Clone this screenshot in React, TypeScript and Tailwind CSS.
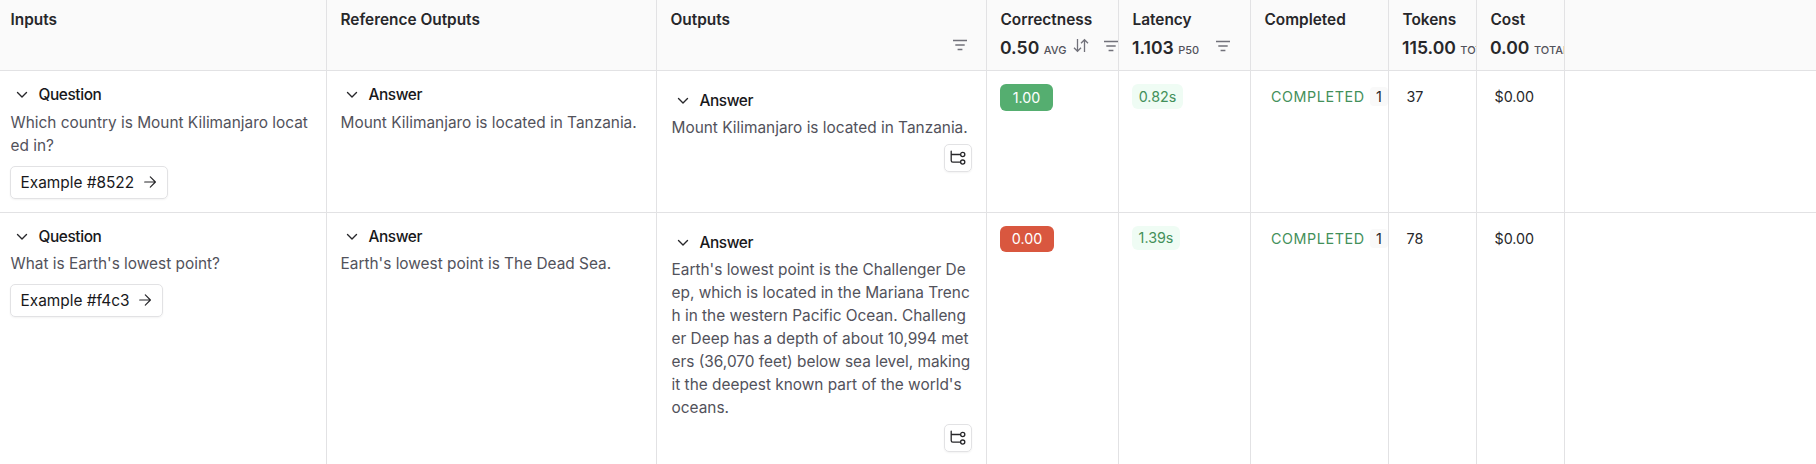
import type { ReactNode } from "react";

const GRID =
  "grid grid-cols-[327px_330px_330px_132px_132px_138px_88px_88px_minmax(0,1fr)]";

type Row = {
  question: string;
  example: string;
  reference: string;
  output: string;
  score: string;
  scoreClass: string;
  latency: string;
  latencyClass: string;
  tokens: string;
  gapClass: string;
};

const rows: Row[] = [
  {
    question: "Which country is Mount Kilimanjaro located in?",
    example: "Example #8522",
    reference: "Mount Kilimanjaro is located in Tanzania.",
    output: "Mount Kilimanjaro is located in Tanzania.",
    score: "1.00",
    scoreClass: "h-[27px] w-[53px] bg-[#55ae70]",
    latency: "0.82s",
    latencyClass: "h-[25px] w-[51px]",
    tokens: "37",
    gapClass: "gap-[5px]",
  },
  {
    question: "What is Earth's lowest point?",
    example: "Example #f4c3",
    reference: "Earth's lowest point is The Dead Sea.",
    output:
      "Earth's lowest point is the Challenger Deep, which is located in the Mariana Trench in the western Pacific Ocean. Challenger Deep has a depth of about 10,994 meters (36,070 feet) below sea level, making it the deepest known part of the world's oceans.",
    score: "0.00",
    scoreClass: "h-[26px] w-[54px] bg-[#d9573f]",
    latency: "1.39s",
    latencyClass: "h-[24px] w-[48px]",
    tokens: "78",
    gapClass: "gap-1",
  },
];

function FilterIcon() {
  return (
    <svg width="16" height="12" viewBox="0 0 16 12" className="shrink-0" fill="none" stroke="#71717a" strokeWidth="1.3">
      <path d="M1 1.5h14M3.3 6h9.4M5.6 10.5h4.8" />
    </svg>
  );
}

function SortIcon() {
  return (
    <svg width="16" height="15" viewBox="0 0 16 15" className="shrink-0" fill="none" stroke="#71717a" strokeWidth="1.3">
      <path d="M4.5 1v12M1 9.8l3.5 3.5L8 9.8M11.5 14V1.8M8 5.2l3.5-3.5L15 5.2" />
    </svg>
  );
}

function Chevron() {
  return (
    <svg width="12" height="8" viewBox="0 0 12 8" className="shrink-0" fill="none" stroke="#27272a" strokeWidth="1.4" strokeLinecap="round" strokeLinejoin="round">
      <path d="M1.5 1.5L6 6l4.500-4.500" />
    </svg>
  );
}

function Arrow() {
  return (
    <svg width="14" height="14" viewBox="0 0 14 14" className="shrink-0" fill="none" stroke="#27272a" strokeWidth="1.2" strokeLinecap="round" strokeLinejoin="round">
      <path d="M1.700 7h10.600M7.300 1.900L12.400 7l-5.100 5.100" />
    </svg>
  );
}

function TreeIcon() {
  return (
    <svg width="16" height="16" viewBox="0 0 16 16" fill="none" stroke="#27272a" strokeWidth="1.300" strokeLinecap="round">
      <path d="M1.200 1.200v9.300c0 1.100.5 1.600 1.600 1.600h7.700M1.200 4.500h9.300" />
      <circle cx="12.700" cy="4.500" r="2.100" />
      <circle cx="12.700" cy="12.100" r="2.100" />
    </svg>
  );
}

function HeadCell({ title, children }: { title: string; children?: ReactNode }) {
  return (
    <div className="h-full min-w-0 overflow-hidden border-r border-[#e2e2e4] pt-2">
      <div className="pl-[13.5px] text-[15.400px] leading-[23px] font-semibold whitespace-nowrap text-[#27272a]">
        {title}
      </div>
      {children}
    </div>
  );
}

function Stat({ value, unit, children }: { value: string; unit: string; children?: ReactNode }) {
  return (
    <div className="flex h-[33px] items-center pl-[13px] whitespace-nowrap">
      <div className="flex items-baseline gap-[4.5px]">
        <span className="text-[17.600px] leading-6 font-semibold text-[#27272a]">{value}</span>
        <span className="text-[11px] font-medium text-[#52525b]">{unit}</span>
      </div>
      {children}
    </div>
  );
}

function Field({ label, text, gapClass }: { label: string; text: string; gapClass: string }) {
  return (
    <div className={`flex flex-col ${gapClass}`}>
      <div className="flex h-[23px] items-center gap-[11px] pl-[5px]">
        <Chevron />
        <span className="text-[15.400px] leading-[23px] font-medium tracking-[-0.4px] text-[#18181b]">{label}</span>
      </div>
      <div className="text-[15.400px] leading-[23px] break-all text-[#52525b]">{text}</div>
    </div>
  );
}

function Cell({ children, className = "" }: { children?: ReactNode; className?: string }) {
  return <div className={`min-w-0 overflow-hidden border-r border-[#e2e2e4] ${className}`}>{children}</div>;
}

export default function App() {
  return (
    <div className="flex h-[464px] w-full flex-col overflow-hidden bg-white font-['Inter',sans-serif] text-[#27272a]">
      <div className={`${GRID} h-[71px] shrink-0 border-b border-[#e2e2e4] bg-[#fafafa]`}>
        <div className="h-full border-r border-[#e2e2e4] pt-2 pl-[10.5px] text-[15.400px] leading-[23px] font-semibold">
          Inputs
        </div>
        <HeadCell title="Reference Outputs" />
        <HeadCell title="Outputs">
          <div className="flex justify-end pt-2 pr-[18px]">
            <FilterIcon />
          </div>
        </HeadCell>
        <HeadCell title="Correctness">
          <Stat value="0.50" unit="AVG">
            <div className="flex items-center gap-[14px] pb-1 pl-[7px]">
              <SortIcon />
              <FilterIcon />
            </div>
          </Stat>
        </HeadCell>
        <HeadCell title="Latency">
          <Stat value="1.103" unit="P50">
            <div className="pb-1 pl-[16px]">
              <FilterIcon />
            </div>
          </Stat>
        </HeadCell>
        <HeadCell title="Completed" />
        <HeadCell title="Tokens">
          <Stat value="115.00" unit="TOTAL" />
        </HeadCell>
        <HeadCell title="Cost">
          <Stat value="0.00" unit="TOTAL" />
        </HeadCell>
      </div>

      {rows.map((row, i) => (
        <div
          key={row.example}
          className={`${GRID} shrink-0 ${i === 0 ? "h-[142px] border-b border-[#e2e2e4]" : "h-[251px]"}`}
        >
          <Cell className="pt-3 pr-[12px] pl-[10.5px]">
            <Field label="Question" text={row.question} gapClass={row.gapClass} />
            <button className="mt-[9px] -ml-[0.5px] flex h-[33px] items-center gap-[9px] rounded-[5px] border border-[#e2e2e4] pr-[10px] pb-px pl-[9.5px] text-[15.400px] leading-[23px] whitespace-nowrap text-[#18181b] shadow-xs">
              {row.example}
              <Arrow />
            </button>
          </Cell>
          <Cell className="pt-3 pr-3 pl-[13.5px]">
            <Field label="Answer" text={row.reference} gapClass={row.gapClass} />
          </Cell>
          <Cell className="pt-[18px] pr-[14px] pl-[14.5px]">
            <Field label="Answer" text={row.output} gapClass="gap-1" />
            <div className="flex justify-end pt-[5px]">
              <button className="flex size-7 items-center justify-center rounded-[5px] border border-[#e2e2e4] shadow-xs">
                <TreeIcon />
              </button>
            </div>
          </Cell>
          <Cell className="pt-[13px] pl-[13px]">
            <div className={`flex items-center justify-center rounded-md text-[14.300px] text-white ${row.scoreClass}`}>
              {row.score}
            </div>
          </Cell>
          <Cell className="pt-[13px] pl-[13px]">
            <div className={`flex items-center justify-center rounded-md bg-[#effcf4] text-[14.300px] text-[#43905a] ${row.latencyClass}`}>
              {row.latency}
            </div>
          </Cell>
          <Cell className="pt-[13px] pl-[20px]">
            <div className="flex h-[25px] items-center">
              <span className="w-[99px] shrink-0 text-[14.300px] tracking-[0.600px] text-[#43905a]">COMPLETED</span>
              <span className="flex h-[19px] w-[18px] shrink-0 items-center justify-center rounded bg-[#f9f9f9] text-[14.300px]">1</span>
            </div>
          </Cell>
          <Cell className="pt-[13px] pl-[17.5px] text-[14.300px] leading-[25px]">{row.tokens}</Cell>
          <Cell className="pt-[13px] pl-[17.5px] text-[14.300px] leading-[25px]">$0.00</Cell>
        </div>
      ))}
    </div>
  );
}
